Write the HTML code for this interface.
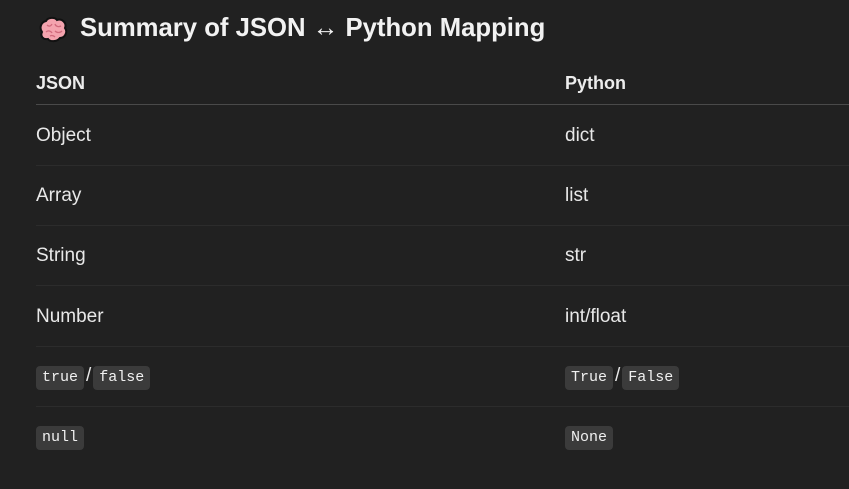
<!DOCTYPE html>
<html><head><meta charset="utf-8"><style>
html,body{margin:0;padding:0;background:#212121;width:849px;height:489px;overflow:hidden;font-family:"Liberation Sans",sans-serif;color:#ececec}
.a{position:absolute;white-space:nowrap}
h1{position:absolute;left:80px;top:14px;margin:0;font-size:25.7px;font-weight:bold;color:#f2f2f2}
.th{font-weight:bold;font-size:18px;top:73px}
.td{font-size:19px;color:#e8e8e8}
.line{position:absolute;left:36px;right:0;height:1px;background:#2c2c2c}
code{font-family:"Liberation Mono",monospace;font-size:15px;background:#3b3b3b;border-radius:4px;padding:4px 6px;color:#f0f0f0;display:inline-block;line-height:16px}
.s{margin:0 2px}
</style></head><body>
<svg class="a" style="left:38px;top:16px" width="30" height="28" viewBox="0 0 30 28">
<path d="M4 16 C1 12 3 6 8 5 C10 1 17 1 19 4 C24 2 29 7 27 12 C30 16 27 22 22 22 C19 26 12 26 10 23 C5 24 2 20 4 16Z" fill="#f4a3ae" stroke="#111" stroke-width="2"/>
<path d="M9 9 C11 11 13 10 14 8 M17 8 C18 11 21 11 23 10 M8 16 C10 14 13 15 14 17 M17 15 C19 17 22 17 24 15 M12 20 C14 19 16 20 17 21" fill="none" stroke="#d06a7c" stroke-width="1.3"/>
</svg>
<h1>Summary of JSON ↔ Python Mapping</h1>
<div class="a th" style="left:36px">JSON</div>
<div class="a th" style="left:565px">Python</div>
<div class="line" style="top:104px;background:#4a4a4a"></div>
<div class="a td" style="left:36px;top:125px">Object</div><div class="a td" style="left:565px;top:125px">dict</div>
<div class="line" style="top:165px"></div>
<div class="a td" style="left:36px;top:185px">Array</div><div class="a td" style="left:565px;top:185px">list</div>
<div class="line" style="top:225px"></div>
<div class="a td" style="left:36px;top:245px">String</div><div class="a td" style="left:565px;top:245px">str</div>
<div class="line" style="top:285px"></div>
<div class="a td" style="left:36px;top:306px">Number</div><div class="a td" style="left:565px;top:306px">int/float</div>
<div class="line" style="top:346px"></div>
<div class="a td" style="left:36px;top:365px"><code>true</code><span class="s">/</span><code>false</code></div>
<div class="a td" style="left:565px;top:365px"><code>True</code><span class="s">/</span><code>False</code></div>
<div class="line" style="top:406px"></div>
<div class="a td" style="left:36px;top:425px"><code>null</code></div>
<div class="a td" style="left:565px;top:425px"><code>None</code></div>
</body></html>
